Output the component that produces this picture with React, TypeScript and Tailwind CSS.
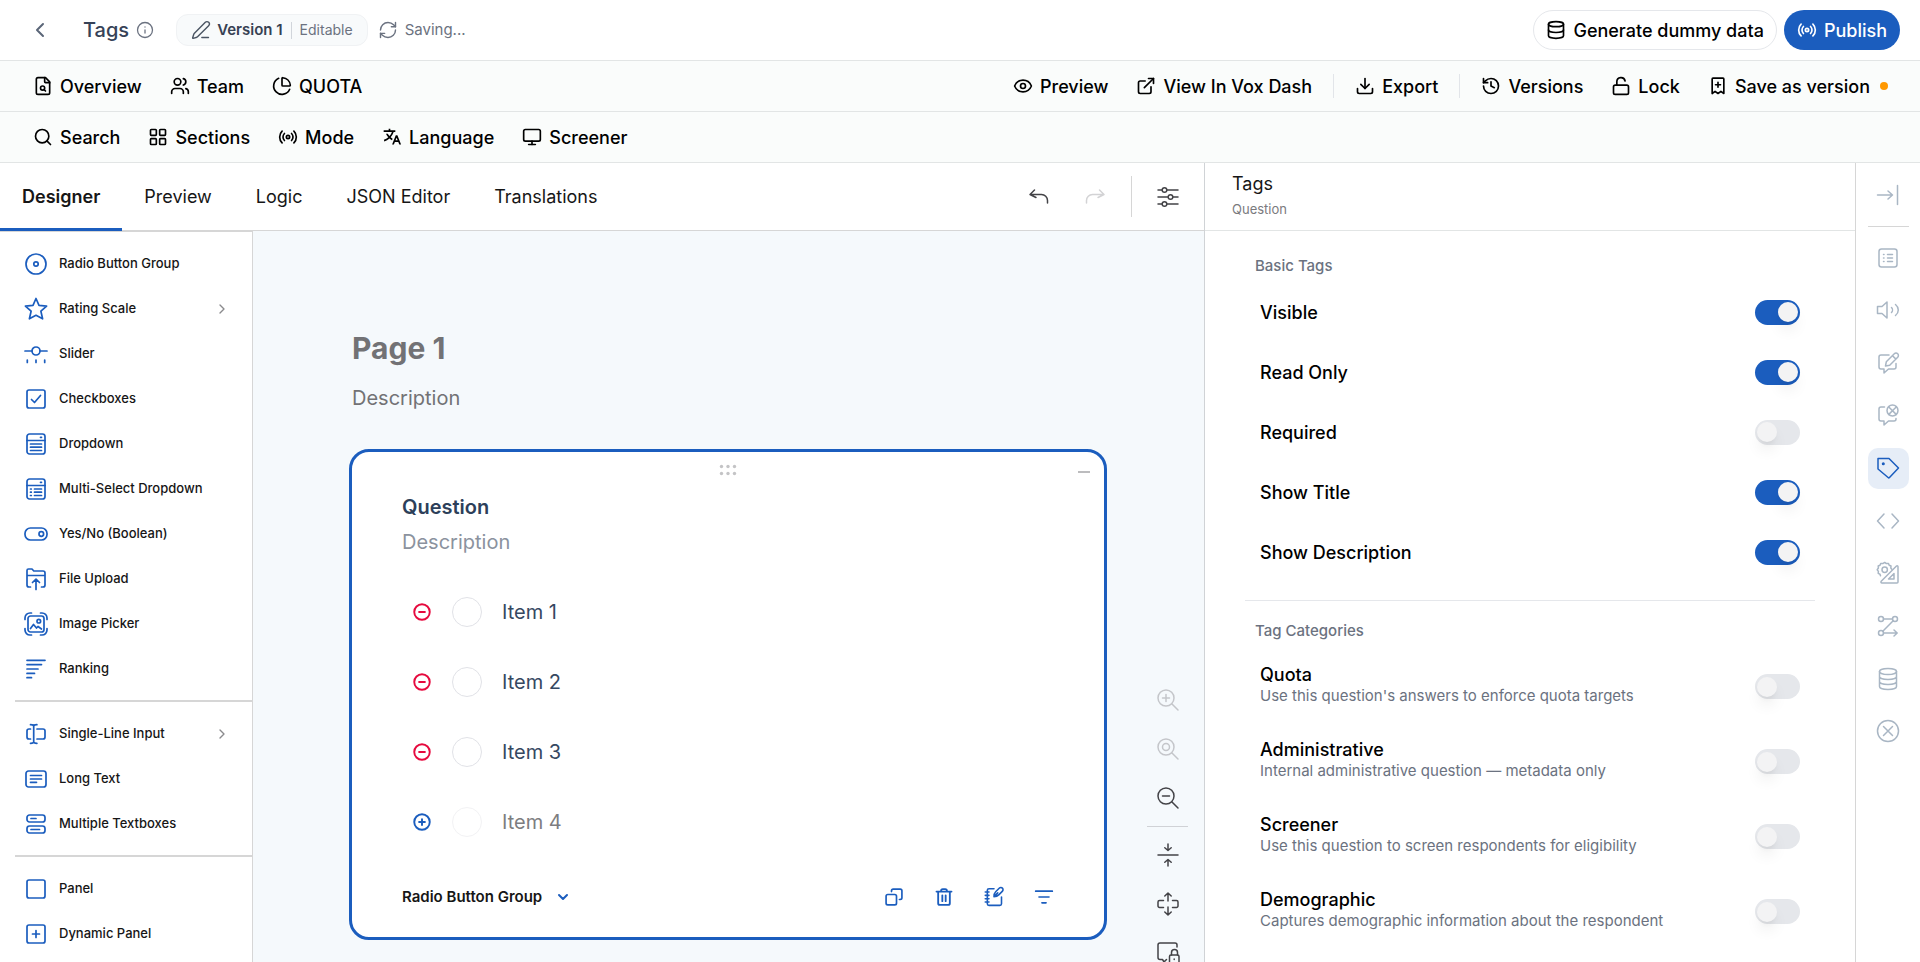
import React, { useState } from 'react';
import {
  ChartPie,
  ChevronDown,
  ChevronLeft,
  ChevronRight,
  Database,
  Download,
  ExternalLink,
  Eye,
  History,
  Info,
  LayoutGrid,
  LockOpen,
  Monitor,
  PenLine,
  Radio,
  RefreshCw,
  Search,
  Users,
} from 'lucide-react';
import { RiTranslate2 } from 'react-icons/ri';

type GlyphProps = { children: React.ReactNode; className?: string; width?: number };

function Glyph({ children, className = 'size-6', width = 1.5 }: GlyphProps) {
  return (
    <svg
      viewBox="0 0 24 24"
      fill="none"
      stroke="currentColor"
      strokeWidth={width}
      strokeLinecap="round"
      strokeLinejoin="round"
      aria-hidden="true"
      className={`shrink-0 ${className}`}
    >
      {children}
    </svg>
  );
}

/* ---------- top bars ---------- */

const navIcon = 'size-5 shrink-0';

function NavItem({ icon, label, dot }: { icon: React.ReactNode; label: string; dot?: boolean }) {
  return (
    <button type="button" className="flex h-10 items-center gap-[7px] rounded-lg px-3 text-lg font-medium whitespace-nowrap text-black">
      {icon}
      <span className="pt-0.5">{label}</span>
      {dot && <span className="ml-[3px] size-2 rounded-full bg-[#ff9800]" />}
    </button>
  );
}

const fileSearch = (
  <Glyph className={navIcon} width={2}>
    <path d="M14 2v5a1 1 0 0 0 1 1h5" />
    <path d="M15 2H6a2 2 0 0 0-2 2v16a2 2 0 0 0 2 2h12a2 2 0 0 0 2-2V7z" />
    <circle cx="11.5" cy="14.5" r="2.5" />
    <path d="M13.3 16.3 15 18" />
  </Glyph>
);

const bookmarkPlus = (
  <Glyph className={navIcon} width={2}>
    <path d="M6 2.500h12a1 1 0 0 1 1 1V21l-3.500-2.500L12 21l-3.500-2.500L5 21V3.500a1 1 0 0 1 1-1z" />
    <path d="M12 7.500v6M9 10.500h6" />
  </Glyph>
);

function Divider() {
  return <span className="mx-[5px] h-6 w-px bg-[#e2e5e9]" />;
}

function TopBar() {
  return (
    <header className="flex h-[61px] shrink-0 items-center justify-between border-b border-[#e2e5e5] bg-white pr-5 pl-7">
      <div className="flex items-center">
        <button type="button" aria-label="Back" className="flex size-6 items-center justify-center text-[#5b6678]">
          <ChevronLeft className="size-6" />
        </button>
        <h1 className="ml-[31px] text-xl font-medium text-[#364257]">Tags</h1>
        <Info className="ml-[7px] size-[18px] text-[#6b7280]" strokeWidth={1.7} />
        <div className="ml-[22px] flex h-8 items-center rounded-xl border border-[#f0f2f4] bg-[#f8fafb] px-[14px]">
          <PenLine className="size-5 text-[#4b5563]" strokeWidth={1.7} />
          <span className="ml-[6px] text-[15px] font-semibold text-[#364153]">Version 1</span>
          <span className="mx-2 h-[17px] w-px bg-[#d1d5db]" />
          <span className="text-sm text-[#6b7280]">Editable</span>
        </div>
        <RefreshCw className="ml-[10px] size-5 text-[#6b7280]" strokeWidth={1.7} />
        <span className="ml-[7px] text-[15px] text-[#6b7280]">Saving...</span>
      </div>
      <div className="flex items-center gap-[7px]">
        <button type="button" className="flex h-10 items-center gap-[7px] rounded-full border border-[#e5e7eb] px-3 text-lg font-medium text-black">
          <Database className={navIcon} />
          <span className="pt-0.5">Generate dummy data</span>
        </button>
        <button type="button" className="flex h-10 items-center gap-[7px] rounded-full bg-[#1b5dbe] px-[13px] text-lg font-medium text-white">
          <Radio className={navIcon} />
          <span className="pt-0.5">Publish</span>
        </button>
      </div>
    </header>
  );
}

function NavBars() {
  return (
    <>
      <nav aria-label="Survey" className="flex h-[51px] shrink-0 items-center justify-between border-b border-[#e2e5e5] bg-[#fafcfb] pr-5 pl-[21px]">
        <div className="flex items-center gap-1">
          <NavItem icon={fileSearch} label="Overview" />
          <NavItem icon={<Users className={navIcon} />} label="Team" />
          <NavItem icon={<ChartPie className={navIcon} />} label="QUOTA" />
        </div>
        <div className="flex items-center gap-1">
          <NavItem icon={<Eye className={navIcon} />} label="Preview" />
          <NavItem icon={<ExternalLink className={navIcon} />} label="View In Vox Dash" />
          <Divider />
          <NavItem icon={<Download className={navIcon} />} label="Export" />
          <Divider />
          <NavItem icon={<History className={navIcon} />} label="Versions" />
          <NavItem icon={<LockOpen className={navIcon} />} label="Lock" />
          <NavItem icon={bookmarkPlus} label="Save as version" dot />
        </div>
      </nav>
      <nav aria-label="Tools" className="flex h-[51px] shrink-0 items-center gap-1 border-b border-[#e2e5e5] bg-[#fafcfb] pr-5 pl-[21px]">
        <NavItem icon={<Search className={navIcon} />} label="Search" />
        <NavItem icon={<LayoutGrid className={navIcon} />} label="Sections" />
        <NavItem icon={<Radio className={navIcon} />} label="Mode" />
        <NavItem icon={<RiTranslate2 className={navIcon} />} label="Language" />
        <NavItem icon={<Monitor className={navIcon} />} label="Screener" />
      </nav>
    </>
  );
}

/* ---------- designer tabs ---------- */

const tabs = ['Designer', 'Preview', 'Logic', 'JSON Editor', 'Translations'];

function TabBar() {
  return (
    <div className="flex h-[68px] shrink-0 items-stretch justify-between border-b border-[#d6d6d6] bg-white">
      <div role="tablist" className="flex">
        {tabs.map((tab, i) => (
          <button
            key={tab}
            type="button"
            role="tab"
            aria-selected={i === 0}
            className={
              i === 0
                ? '-mb-px border-b-[3px] border-[#1b5dbe] px-[22px] pt-[3px] text-lg font-semibold text-[#161616]'
                : 'px-[22px] pt-px text-lg text-[#161616]'
            }
          >
            {tab}
          </button>
        ))}
      </div>
      <div className="flex items-center pr-6 text-[#434347]">
        <button type="button" aria-label="Undo">
          <Glyph>
            <path d="M7.500 5 3 9.500l6 3M3.500 9.500h11a6 6 0 0 1 6 6V18" />
          </Glyph>
        </button>
        <button type="button" aria-label="Redo" disabled className="ml-8 text-[#d3d3d5]">
          <Glyph>
            <path d="M16.500 5 21 9.500l-6 3M20.500 9.500h-11a6 6 0 0 0-6 6V18" />
          </Glyph>
        </button>
        <span className="mr-6 ml-6 h-[41px] w-px bg-[#d6d6d6]" />
        <button type="button" aria-label="Survey settings">
          <Glyph>
            <path d="M2 5h4M11 5h11M2 12h10M17 12h5M2 19h4M11 19h11" />
            <circle cx="8.500" cy="5" r="2.300" />
            <circle cx="14.500" cy="12" r="2.300" />
            <circle cx="8.500" cy="19" r="2.300" />
          </Glyph>
        </button>
      </div>
    </div>
  );
}

/* ---------- toolbox ---------- */

type Tool = { label: string; icon: React.ReactNode; more?: boolean };

const toolGroups: Tool[][] = [
  [
    {
      label: 'Radio Button Group',
      icon: (
        <>
          <circle cx="12" cy="12" r="10" />
          <circle cx="12" cy="12" r="2.200" />
        </>
      ),
    },
    {
      label: 'Rating Scale',
      icon: <path d="m12 1.500 3 6.900 7.600.700-5.700 5.100 1.700 7.600L12 18.300l-6.600 3.500 1.700-7.600L1.400 9.100 9 8.400z" />,
      more: true,
    },
    {
      label: 'Slider',
      icon: (
        <>
          <path d="M1 9h7M16 9h7M3.300 18v2.500M12 18v2.500M20.700 18v2.500" />
          <circle cx="12" cy="9" r="4" />
        </>
      ),
    },
    {
      label: 'Checkboxes',
      icon: (
        <>
          <rect x="3" y="3" width="18" height="18" rx="2" />
          <path d="m7.500 12.500 3 3 6-7" />
        </>
      ),
    },
    {
      label: 'Dropdown',
      icon: (
        <>
          <rect x="3" y="2" width="18" height="20" rx="2.500" />
          <path d="M3 8.500h18M16.500 5.300h1M6.500 12h11M6.500 15.200h11M6.500 18.500h11" />
        </>
      ),
    },
    {
      label: 'Multi-Select Dropdown',
      icon: (
        <>
          <rect x="3" y="2" width="18" height="20" rx="2.500" />
          <path d="M3 8.500h18M16.500 5.300h1M6.500 12h.8M6.500 15.200h.8M6.500 18.500h.8M10.500 12h7M10.500 15.200h7M10.500 18.500h7" />
        </>
      ),
    },
    {
      label: 'Yes/No (Boolean)',
      icon: (
        <>
          <rect x="1" y="6" width="22" height="12" rx="5.500" />
          <circle cx="17.300" cy="12" r="2.300" />
        </>
      ),
    },
    {
      label: 'File Upload',
      icon: (
        <>
          <path d="M6.500 20H5a2 2 0 0 1-2-2V3.500A1.500 1.500 0 0 1 4.500 2H8l1.800 2H19a2 2 0 0 1 2 2v12a2 2 0 0 1-2 2h-1.500M3 8.500h18" />
          <path d="M12 22.500V12.500M8.500 15.500l3.500-3.300 3.500 3.300" />
        </>
      ),
    },
    {
      label: 'Image Picker',
      icon: (
        <>
          <rect x="4" y="4" width="16" height="16" rx="2.500" />
          <circle cx="14.800" cy="9.200" r="1.800" />
          <path d="m6.500 16.500 3-4 3 3.500 1.500-1.500 3.500 2.500" />
          <path d="M1 7.500V6a5 5 0 0 1 5-5h1.500M16.500 1H18a5 5 0 0 1 5 5v1.500M23 16.500V18a5 5 0 0 1-5 5h-1.500M7.500 23H6a5 5 0 0 1-5-5v-1.500" />
        </>
      ),
    },
    { label: 'Ranking', icon: <path d="M3 3.300h18M3 7.600h14.500M3 12h11M3 16.400h7.500M3 20.700h4.500" /> },
  ],
  [
    {
      label: 'Single-Line Input',
      icon: <path d="M6.500 7H5a2 2 0 0 0-2 2v6a2 2 0 0 0 2 2h1.500M13 7h6a2 2 0 0 1 2 2v6a2 2 0 0 1-2 2h-6M6.500 2.700c1.800 0 3.200.500 3.200 1.500 0-1 1.400-1.500 3.200-1.500M6.500 21.300c1.800 0 3.200-.500 3.200-1.500 0 1 1.400 1.500 3.200 1.500M9.700 4v16" />,
      more: true,
    },
    {
      label: 'Long Text',
      icon: (
        <>
          <rect x="2" y="4" width="20" height="16" rx="2.500" />
          <path d="M6.500 8.500h11M6.500 12h11M6.500 15.300h6" />
        </>
      ),
    },
    {
      label: 'Multiple Textboxes',
      icon: (
        <>
          <rect x="3" y="3" width="18" height="7" rx="2.500" />
          <rect x="3" y="14" width="18" height="7" rx="2.500" />
          <path d="M7 6.500h5M7 17.500h8.500" />
        </>
      ),
    },
  ],
  [
    { label: 'Panel', icon: <rect x="3" y="3" width="18" height="18" rx="2" /> },
    {
      label: 'Dynamic Panel',
      icon: (
        <>
          <rect x="3" y="3" width="18" height="18" rx="2" />
          <path d="M12 8.500v7M8.500 12h7" />
        </>
      ),
    },
  ],
];

function Toolbox() {
  return (
    <aside className="w-[253px] shrink-0 overflow-hidden border-t border-r border-[#d6d6d6] bg-white pt-[9px]">
      {toolGroups.map((group, g) => (
        <ul key={g} className={g > 0 ? 'ml-[15px] border-t-2 border-[#d6d6d6] pt-[9px] pb-[9px]' : 'pb-[9px] pl-[15px]'}>
          {group.map((tool) => (
            <li key={tool.label}>
              <button type="button" className="flex h-[45px] w-full items-center pr-[22px] pl-[9px] text-left text-[13px] font-medium text-[#161616]">
                <Glyph className="size-6 text-[#1b5dbe]" width={1.700}>{tool.icon}</Glyph>
                <span className="ml-[11px] grow">{tool.label}</span>
                {tool.more && <ChevronRight className="size-4 text-[#8a8a8d]" strokeWidth={2} />}
              </button>
            </li>
          ))}
        </ul>
      ))}
    </aside>
  );
}

/* ---------- design surface ---------- */

const items = ['Item 1', 'Item 2', 'Item 3', 'Item 4'];

function QuestionCard() {
  return (
    <section aria-label="Question" className="relative mt-9 -ml-[3px] rounded-[20px] border-[3px] border-[#1b5dbe] bg-white px-[50px] pt-10 pb-[25px]">
      <svg viewBox="0 0 18 12" className="absolute top-3 left-1/2 h-3 w-[18px] -translate-x-1/2 fill-[#c4c4c6]" aria-hidden="true">
        <circle cx="2.500" cy="2.500" r="1.700" />
        <circle cx="9" cy="2.500" r="1.700" />
        <circle cx="15.500" cy="2.500" r="1.700" />
        <circle cx="2.500" cy="9.500" r="1.700" />
        <circle cx="9" cy="9.500" r="1.700" />
        <circle cx="15.500" cy="9.500" r="1.700" />
      </svg>
      <button type="button" aria-label="Collapse" className="absolute top-[10px] right-[10px] flex h-5 w-5 items-center justify-center">
        <span className="h-[2px] w-3 bg-[#bcbcbe]" />
      </button>
      <h3 className="text-xl leading-[30px] font-semibold text-[#2d3f5a]">Question</h3>
      <p className="mt-[5px] text-xl leading-[30px] text-[#8b929e]">Description</p>
      <ul className="mt-5">
        {items.map((item, i) => {
          const ghost = i === items.length - 1;
          return (
            <li key={item} className="flex h-[70px] items-center pl-[10px]">
              <button
                type="button"
                aria-label={ghost ? 'Add item' : `Remove ${item}`}
                className={ghost ? 'text-[#1b5dbe]' : 'text-[#e60a3e]'}
              >
                <Glyph className="size-5" width={2.300}>
                  <circle cx="12" cy="12" r="9.300" />
                  <path d={ghost ? 'M8.500 12h7M12 8.500v7' : 'M8.500 12h7'} />
                </Glyph>
              </button>
              <label className={ghost ? 'flex items-center text-xl text-[#7d7d80]' : 'flex items-center text-xl text-[#364861]'}>
                <input
                  type="radio"
                  name="question"
                  disabled={ghost}
                  className="mr-5 ml-5 size-[30px] appearance-none rounded-full border border-[#e1e2e7] bg-white disabled:border-[#f2f2f4]"
                />
                {item}
              </label>
            </li>
          );
        })}
      </ul>
      <div className="mt-[25px] flex h-[30px] items-center justify-between">
        <button type="button" className="flex items-center gap-[13px] text-[15px] font-semibold text-[#161616]">
          Radio Button Group
          <ChevronDown className="size-4 text-[#1b5dbe]" strokeWidth={3} />
        </button>
        <div className="flex items-center gap-[30px] text-[#1b5dbe]">
          <button type="button" aria-label="Duplicate">
            <Glyph className="size-5" width={2}>
              <rect x="2.500" y="9" width="12.500" height="12.500" rx="2" />
              <path d="M9 5.500V4.500a2 2 0 0 1 2-2h8.500a2 2 0 0 1 2 2V13a2 2 0 0 1-2 2h-1" />
            </Glyph>
          </button>
          <button type="button" aria-label="Delete">
            <Glyph className="size-5" width={2.200}>
              <path d="M3 5.500h18M5 5.500v14a2 2 0 0 0 2 2h10a2 2 0 0 0 2-2v-14M8.500 5.500V4.500a2 2 0 0 1 2-2h3a2 2 0 0 1 2 2v1M10 10v7M14 10v7" />
            </Glyph>
          </button>
          <button type="button" aria-label="Edit">
            <Glyph className="size-5 overflow-visible" width={1.900}>
              <path d="M12 2H6a2 2 0 0 0-2 2v16a2 2 0 0 0 2 2h13a2 2 0 0 0 2-2v-8M1.500 6h4.500M1.500 10h4.500M1.500 14h4.500M1.500 18h4.500" />
              <path d="M12 11.500c0-2.500.500-4.300 2-5.800l4.200-4.200c1.300-1.300 3-1 3.900-.1s1.100 2.600-.200 3.900l-4.200 4.200c-1.500 1.500-3.200 2-5.700 2zM12 11.500l4.500-4.500" />
            </Glyph>
          </button>
          <button type="button" aria-label="Logic">
            <Glyph className="size-5" width={2}>
              <path d="M2 5h20M6 12h12M9.500 19h5" />
            </Glyph>
          </button>
        </div>
      </div>
    </section>
  );
}

function ZoomTools() {
  return (
    <div className="flex w-[61px] shrink-0 flex-col items-center justify-end overflow-hidden pr-3">
      <div className="-mb-[3px] flex flex-col items-center gap-[25px] text-[#434347]">
        <button type="button" aria-label="Zoom in" disabled className="text-[#c4c6ca]">
          <Glyph>
            <circle cx="10" cy="10" r="8" />
            <path d="m16 16 6 6M10 6.500v7M6.500 10h7" />
          </Glyph>
        </button>
        <button type="button" aria-label="Zoom to 100%" disabled className="text-[#c4c6ca]">
          <Glyph>
            <circle cx="10" cy="10" r="8" />
            <circle cx="10" cy="10" r="3.500" />
            <path d="m16 16 6 6" />
          </Glyph>
        </button>
        <button type="button" aria-label="Zoom out">
          <Glyph>
            <circle cx="10" cy="10" r="8" />
            <path d="m16 16 6 6M6.500 10h7" />
          </Glyph>
        </button>
        <span className="-my-[9px] h-px w-[41px] shrink-0 bg-[#d0d2d6]" />
        <button type="button" aria-label="Collapse all">
          <Glyph>
            <path d="M2 12h20M12 1v6M8.800 4.800 12 7.500l3.200-2.700M12 23v-6M8.800 19.200 12 16.500l3.200 2.700" />
          </Glyph>
        </button>
        <button type="button" aria-label="Expand all">
          <Glyph>
            <path d="M7.500 8.500h-4A1.500 1.500 0 0 0 2 10v4a1.500 1.500 0 0 0 1.500 1.500h4M16.500 8.500h4A1.500 1.500 0 0 1 22 10v4a1.500 1.500 0 0 1-1.500 1.500h-4M12 9V1.500M8.800 4 12 1l3.200 3M12 15v7.500M8.800 20l3.200 3 3.200-3" />
          </Glyph>
        </button>
        <button type="button" aria-label="Lock questions">
          <Glyph>
            <path d="M10.500 18.500 8 21l-1.500-2.500H4a2 2 0 0 1-2-2V4a2 2 0 0 1 2-2h15a2 2 0 0 1 2 2v2" />
            <path d="M15.500 14v-2.500a3 3 0 0 1 6 0V14" />
            <rect x="13.500" y="14" width="9.500" height="8.500" rx="1.500" />
            <path d="M18.200 18v.5" />
          </Glyph>
        </button>
      </div>
    </div>
  );
}

function Canvas() {
  return (
    <div className="flex min-w-0 grow bg-[#f5f9fc]">
      <div className="min-w-0 grow overflow-hidden pt-[94px] pr-9 pl-[99px]">
        <h2 className="text-[30px] leading-[46px] font-bold text-[#727275]">Page 1</h2>
        <p className="mt-3 text-xl leading-[30px] text-[#727275]">Description</p>
        <QuestionCard />
      </div>
      <ZoomTools />
    </div>
  );
}

/* ---------- property panel ---------- */

function Toggle({ label, hint, on }: { label: string; hint?: string; on: boolean }) {
  const [checked, setChecked] = useState(on);
  return (
    <label className={hint ? 'flex h-[75px] items-center justify-between' : 'flex h-[60px] items-center justify-between'}>
      <span className={hint ? 'flex flex-col pb-1' : 'flex flex-col pt-0.5'}>
        <span className="text-lg leading-[22px] font-medium text-black">{label}</span>
        {hint && <span className="text-[15px] leading-5 text-[#6b7280]">{hint}</span>}
      </span>
      <input
        type="checkbox"
        role="switch"
        checked={checked}
        onChange={(e) => setChecked(e.target.checked)}
        className="flex h-[25px] w-[45px] shrink-0 appearance-none items-center rounded-full bg-[#e5e7eb] px-[2px] before:size-5 before:rounded-full before:bg-[#f3f3f4] before:shadow-lg checked:justify-end checked:bg-[#1b5dbe]"
      />
    </label>
  );
}

function PropertyPanel() {
  return (
    <section className="flex w-[651px] shrink-0 flex-col border-l border-[#d0d3d6] bg-white">
      <header className="h-[68px] shrink-0 border-b border-[#e2e5e5] pt-2 pl-[27px]">
        <h2 className="text-lg leading-[26px] text-[#161616]">Tags</h2>
        <p className="text-[13px] leading-6 text-[#7a7a7e]">Question</p>
      </header>
      <div className="min-h-0 grow overflow-hidden px-10 pt-5">
        <h3 className="pl-[10px] text-[15px] leading-[30px] font-medium text-[#6b7280]">Basic Tags</h3>
        <div className="mt-px pr-[15px] pl-[15px]">
          <Toggle label="Visible" on />
          <Toggle label="Read Only" on />
          <Toggle label="Required" on={false} />
          <Toggle label="Show Title" on />
          <Toggle label="Show Description" on />
        </div>
        <hr className="mt-[18px] border-[#e5e7eb]" />
        <h3 className="mt-[15px] pl-[10px] text-[15px] leading-[30px] font-medium text-[#6b7280]">Tag Categories</h3>
        <div className="mt-[3px] pr-[15px] pl-[15px]">
          <Toggle label="Quota" hint="Use this question's answers to enforce quota targets" on={false} />
          <Toggle label="Administrative" hint="Internal administrative question — metadata only" on={false} />
          <Toggle label="Screener" hint="Use this question to screen respondents for eligibility" on={false} />
          <Toggle label="Demographic" hint="Captures demographic information about the respondent" on={false} />
        </div>
      </div>
    </section>
  );
}

/* ---------- side rail ---------- */

const rail: { label: string; icon: React.ReactNode; active?: boolean }[] = [
  {
    label: 'General',
    icon: (
      <>
        <rect x="3" y="3" width="18" height="18" rx="2.500" />
        <path d="M7.500 8.500h.5M7.500 12h.5M7.500 15.500h.5M11.500 8.500h5M11.500 12h5M11.500 15.500h5" />
      </>
    ),
  },
  {
    label: 'Audio',
    icon: <path d="M11 4v16l-5-4.500H1.500v-7H6zM15.500 9.500c1.300 1.300 1.300 3.700 0 5M19.500 6.500c3.700 3 3.700 8 0 11" />,
  },
  {
    label: 'Comments',
    icon: (
      <>
        <path d="M13 4H5a2 2 0 0 0-2 2v10a2 2 0 0 0 2 2h3v4l4.500-4H18a2 2 0 0 0 2-2v-3.500" />
        <path d="m9.500 15 .8-4.200 8-8a2 2 0 0 1 3.400 3.400l-8 8zM16.500 4.700l3.200 3.200" />
      </>
    ),
  },
  {
    label: 'Validation',
    icon: (
      <>
        <path d="M8.500 4H5a2 2 0 0 0-2 2v10a2 2 0 0 0 2 2h3v4l4.500-4H18a2 2 0 0 0 2-2v-.5" />
        <circle cx="16.500" cy="7.500" r="5.500" />
        <path d="m12.800 4 7.400 7.400M20.200 4l-7.400 7.400" />
      </>
    ),
  },
  {
    label: 'Tags',
    active: true,
    icon: (
      <>
        <path d="M2 2.500h11l9.500 9.500-9 9.500a1 1 0 0 1-1.400 0L2 13z" />
        <circle cx="7.300" cy="7.800" r=".8" fill="currentColor" />
      </>
    ),
  },
  { label: 'Code', icon: <path d="m8 5-6.500 7L8 19M16 5l6.500 7-6.500 7" /> },
  {
    label: 'Layout',
    icon: (
      <>
        <path d="M20.500 5 5.200 20.300a1 1 0 0 0 .7 1.700H21a1 1 0 0 0 1-1V5.700A.9.900 0 0 0 20.500 5z" />
        <path d="M18 12.500V18h-5.500z" />
        <circle cx="8.700" cy="8.700" r="2.700" />
        <path d="M4.500 14.800 4 13.200l-1.800-.8.200-2L1.200 8.700l1.200-1.700-.2-2L4 4.200l.8-1.800 2 .2 1.900-1.200 1.700 1.200 2-.2.800 1.800 1.800.8-.2 2 1 1.200" />
      </>
    ),
  },
  {
    label: 'Conditions',
    icon: (
      <>
        <circle cx="5" cy="5" r="2.500" />
        <circle cx="19" cy="5" r="2.500" />
        <circle cx="5" cy="19" r="2.500" />
        <path d="M7.500 5h9M17.200 6.800 6.800 17.200M7.500 19H21M18 16l3.200 3-3.200 3" />
      </>
    ),
  },
  {
    label: 'Data',
    icon: (
      <>
        <ellipse cx="12" cy="4.500" rx="8.500" ry="3" />
        <path d="M3.500 4.500v15c0 1.700 3.800 3 8.500 3s8.500-1.300 8.500-3v-15M3.500 9.500c0 1.700 3.800 3 8.500 3s8.500-1.300 8.500-3M3.500 14.500c0 1.700 3.800 3 8.500 3s8.500-1.300 8.500-3" />
      </>
    ),
  },
  {
    label: 'Clear',
    icon: (
      <>
        <circle cx="12" cy="12" r="10.500" />
        <path d="m7.500 7.500 9 9M16.500 7.500l-9 9" />
      </>
    ),
  },
];

function Rail() {
  return (
    <aside className="flex w-[65px] shrink-0 flex-col items-center border-l border-[#d6d6d6] bg-white pt-[11px] text-[#a9b6c4]">
      <button type="button" aria-label="Collapse panel" className="flex size-[41px] items-center justify-center">
        <Glyph>
          <path d="M1.500 12h15M12 8l4.500 4-4.500 4M21.500 2.500v19" />
        </Glyph>
      </button>
      <span className="mt-[11px] h-px w-[41px] bg-[#d6d6d6]" />
      <div className="mt-[10px] flex h-[515px] flex-col justify-between">
        {rail.map((entry) => (
          <button
            key={entry.label}
            type="button"
            aria-label={entry.label}
            className={
              entry.active
                ? 'flex size-[41px] items-center justify-center rounded-[10px] bg-[#e6edf7] text-[#1b5dbe]'
                : 'flex size-[41px] items-center justify-center rounded-[10px]'
            }
          >
            <Glyph>{entry.icon}</Glyph>
          </button>
        ))}
      </div>
    </aside>
  );
}

export default function App() {
  return (
    <div className="flex h-screen flex-col overflow-hidden bg-white font-['Inter',sans-serif]">
      <TopBar />
      <NavBars />
      <main className="flex min-h-0 grow">
        <div className="flex min-w-0 grow flex-col">
          <TabBar />
          <div className="flex min-h-0 grow">
            <Toolbox />
            <Canvas />
          </div>
        </div>
        <PropertyPanel />
        <Rail />
      </main>
    </div>
  );
}
